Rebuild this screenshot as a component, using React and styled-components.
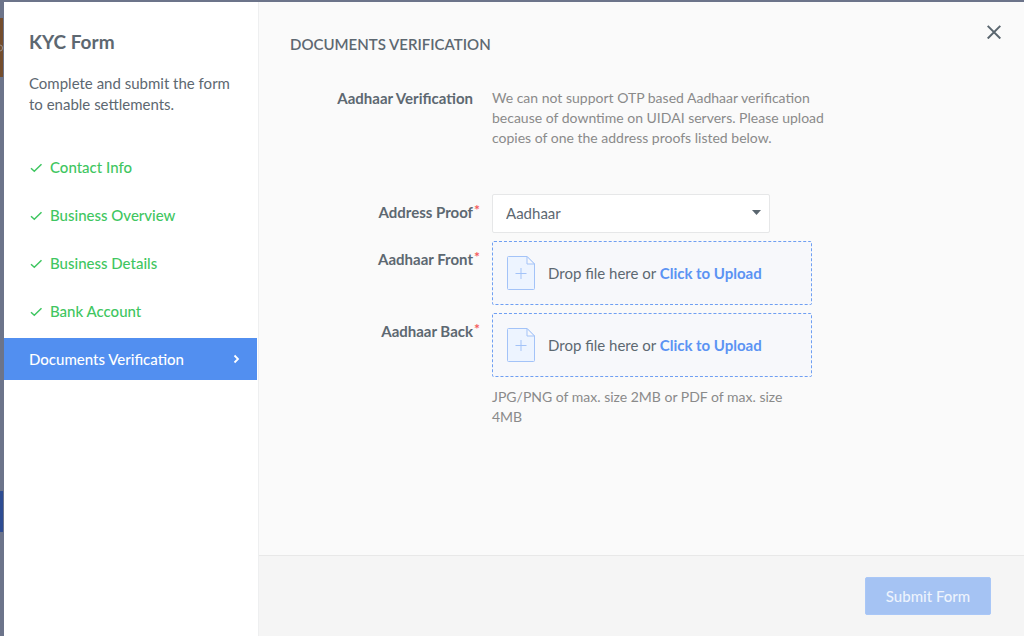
import React from 'react';
import styled, { createGlobalStyle } from 'styled-components';

const GlobalStyle = createGlobalStyle`
  *, *::before, *::after { box-sizing: border-box; }
  body {
    margin: 0;
    font-family: Lato, "Liberation Sans", sans-serif;
    font-size: 15px;
    line-height: 21px;
    color: #5d6871;
    background: #6b7288;
  }
  h1, h2, p, ul { margin: 0; padding: 0; }
`;

const Backdrop = styled.div`
  display: flex;
  min-height: 100vh;
  padding-top: 2px;
  background: #6c748a;
`;

const PageEdge = styled.div`
  display: flex;
  flex-direction: column;
  width: 4px;
  padding-top: 16px;
  padding-right: 1px;
  gap: 414px;
  overflow: hidden;
`;

const EdgeBlock = styled.div`
  flex: none;
  display: flex;
  align-items: center;
  height: ${(p) => p.$height}px;
  background: ${(p) => p.$color};
`;

const Modal = styled.div`
  flex: 1;
  display: flex;
  min-width: 0;
  background: #fafafa;
`;

const Sidebar = styled.aside`
  flex: none;
  width: 255px;
  padding-top: 26px;
  background: #fff;
  border-right: 1px solid #eeeff0;
`;

const Title = styled.h1`
  padding: 0 25px;
  font-size: 19px;
  line-height: 28px;
  font-weight: 700;
`;

const Intro = styled.p`
  padding: 17px 25px 0;
`;

const Steps = styled.ul`
  display: flex;
  flex-direction: column;
  gap: 6px;
  margin-top: 31px;
  list-style: none;
`;

const StepLink = styled.a`
  display: flex;
  align-items: center;
  gap: 7px;
  height: 42px;
  margin-right: 1px;
  padding: 0 16px 0 25px;
  font-weight: 500;
  text-decoration: none;
  color: ${(p) => (p.$active ? '#fff' : '#3fc661')};
  background: ${(p) => (p.$active ? '#528ff0' : 'transparent')};
  justify-content: ${(p) => (p.$active ? 'space-between' : 'flex-start')};
`;

const Main = styled.main`
  flex: 1;
  display: flex;
  flex-direction: column;
  min-width: 0;
`;

const Header = styled.header`
  display: flex;
  align-items: flex-start;
  justify-content: space-between;
  padding: 18px 18px 0 31px;
`;

const Heading = styled.h2`
  padding-top: 12px;
  font-size: 15px;
  line-height: 24px;
  font-weight: 600;
`;

const CloseButton = styled.button`
  display: flex;
  align-items: center;
  justify-content: center;
  width: 24px;
  height: 24px;
  padding: 0;
  border: 0;
  background: none;
  color: #5a666f;
  cursor: pointer;
`;

const Form = styled.form`
  flex: 1;
  display: flex;
  flex-direction: column;
`;

const Fields = styled.div`
  flex: 1;
  display: flex;
  flex-direction: column;
  gap: 8px;
  padding: 32px 32px 24px 31px;
`;

const Row = styled.div`
  display: grid;
  grid-template-columns: 183px minmax(0, 334px);
  column-gap: 19px;
  margin-bottom: ${(p) => (p.$spaced ? 38 : 0)}px;
`;

const LabelCell = styled.div`
  padding-top: ${(p) => p.$top || 0}px;
  text-align: right;
  font-weight: 700;
`;

const Label = styled.label`
  position: relative;
`;

const Required = styled.span`
  position: absolute;
  left: 100%;
  top: -1px;
  padding-left: 1px;
  font-size: 14px;
  line-height: 16px;
  font-weight: 700;
  color: #f45b5b;
`;

const Note = styled.p`
  max-width: ${(p) => p.$width}px;
  margin-top: ${(p) => p.$top || 0}px;
  font-size: 14px;
  line-height: 20px;
  color: #8a8a8a;
`;

const SelectWrap = styled.div`
  position: relative;
  width: 278px;
`;

const Select = styled.select`
  appearance: none;
  display: block;
  width: 100%;
  height: 39px;
  padding: 0 32px 0 13px;
  border: 1px solid #e6e7e8;
  border-radius: 2px;
  background: #fff;
  color: #5d6871;
  font: inherit;
`;

const Caret = styled.svg`
  position: absolute;
  right: 9px;
  top: 16px;
  pointer-events: none;
`;

const DropZone = styled.label`
  position: relative;
  display: flex;
  align-items: center;
  gap: 12px;
  width: 320px;
  height: 64px;
  padding: 0 13px;
  border: 1px dashed #6f9ff2;
  border-radius: 2px;
  background: #f7f8fb;
  cursor: pointer;
`;

const FileInput = styled.input`
  position: absolute;
  inset: 0;
  width: 100%;
  height: 100%;
  opacity: 0;
  cursor: pointer;
`;

const UploadText = styled.strong`
  font-weight: 700;
  color: #5b93f3;
`;

const Footer = styled.footer`
  display: flex;
  justify-content: flex-end;
  padding: 21px 33px;
  border-top: 1px solid #e8e8e8;
  background: #f5f5f5;
`;

const SubmitButton = styled.button`
  width: 126px;
  height: 38px;
  padding: 0;
  border: 1px solid #a9c7f7;
  border-radius: 2px;
  background: #a5c3f3;
  color: #edf3fd;
  font: inherit;
  font-weight: 500;
`;

const CheckIcon = () => (
  <svg width="14" height="12" viewBox="0 0 14 12" fill="none" stroke="currentColor" strokeWidth="1.5" aria-hidden="true">
    <path d="M2 7.2 5.3 10.3 12.5 3.2" />
  </svg>
);

const ChevronIcon = () => (
  <svg width="10" height="12" viewBox="0 0 10 12" fill="none" stroke="currentColor" strokeWidth="1.8" aria-hidden="true">
    <path d="M3.5 2.5 7 6 3.5 9.5" />
  </svg>
);

const CloseIcon = () => (
  <svg width="14" height="14" viewBox="0 0 14 14" fill="none" stroke="currentColor" strokeWidth="2" aria-hidden="true">
    <path d="M.7.9 13.3 13.5M13.3.9.7 13.5" />
  </svg>
);

const FileIcon = () => (
  <svg width="30" height="34" viewBox="0 0 30 34" fill="none" stroke="#a3c3f8" aria-hidden="true">
    <path d="M2.5.5H21L28.5 8V32.5a1 1 0 0 1-1 1H2.5a1 1 0 0 1-1-1V1.5a1 1 0 0 1 1-1Z" fill="#edf4ff" />
    <path d="M21 .5V8H28.5Z" fill="#f7f8fb" />
    <path d="M9.5 17.5H20.5M15 12V23" />
  </svg>
);

const steps = ['Contact Info', 'Business Overview', 'Business Details', 'Bank Account'];

function UploadField({ id, label, hint }) {
  return (
    <Row>
      <LabelCell $top={8}>
        <Label htmlFor={id}>
          {label}
          <Required>*</Required>
        </Label>
      </LabelCell>
      <div>
        <DropZone>
          <FileInput id={id} type="file" />
          <FileIcon />
          <span>
            Drop file here or <UploadText>Click to Upload</UploadText>
          </span>
        </DropZone>
        {hint && <Note $width={300} $top={10}>{hint}</Note>}
      </div>
    </Row>
  );
}

export default function App() {
  return (
    <>
      <GlobalStyle />
      <Backdrop>
        <PageEdge aria-hidden="true">
          <EdgeBlock $height={59} $color="#744d2d">
            <svg width="3" height="8" viewBox="0 0 3 8" fill="none" stroke="#9b9189">
              <path d="M0 1Q2.5 1 2.5 4T0 7" />
            </svg>
          </EdgeBlock>
          <EdgeBlock $height={41} $color="#2d4c93" />
        </PageEdge>
        <Modal role="dialog" aria-labelledby="kyc-title">
          <Sidebar>
            <Title id="kyc-title">KYC Form</Title>
            <Intro>Complete and submit the form to enable settlements.</Intro>
            <nav>
              <Steps>
                {steps.map((step) => (
                  <li key={step}>
                    <StepLink href="#">
                      <CheckIcon />
                      {step}
                    </StepLink>
                  </li>
                ))}
                <li>
                  <StepLink href="#" $active aria-current="step">
                    Documents Verification
                    <ChevronIcon />
                  </StepLink>
                </li>
              </Steps>
            </nav>
          </Sidebar>
          <Main>
            <Header>
              <Heading>DOCUMENTS VERIFICATION</Heading>
              <CloseButton type="button" aria-label="Close">
                <CloseIcon />
              </CloseButton>
            </Header>
            <Form onSubmit={(e) => e.preventDefault()}>
              <Fields>
                <Row $spaced>
                  <LabelCell>Aadhaar Verification</LabelCell>
                  <Note $width={334}>
                    We can not support OTP based Aadhaar verification because of downtime on UIDAI
                    servers. Please upload copies of one the address proofs listed below.
                  </Note>
                </Row>
                <Row>
                  <LabelCell $top={8}>
                    <Label htmlFor="address-proof">
                      Address Proof
                      <Required>*</Required>
                    </Label>
                  </LabelCell>
                  <SelectWrap>
                    <Select id="address-proof" defaultValue="Aadhaar">
                      <option>Aadhaar</option>
                    </Select>
                    <Caret width="9" height="5" viewBox="0 0 9 5" aria-hidden="true">
                      <path d="M0 0H9L4.5 5Z" fill="#5a666f" />
                    </Caret>
                  </SelectWrap>
                </Row>
                <UploadField id="aadhaar-front" label="Aadhaar Front" />
                <UploadField
                  id="aadhaar-back"
                  label="Aadhaar Back"
                  hint="JPG/PNG of max. size 2MB or PDF of max. size 4MB"
                />
              </Fields>
              <Footer>
                <SubmitButton type="submit">Submit Form</SubmitButton>
              </Footer>
            </Form>
          </Main>
        </Modal>
      </Backdrop>
    </>
  );
}
